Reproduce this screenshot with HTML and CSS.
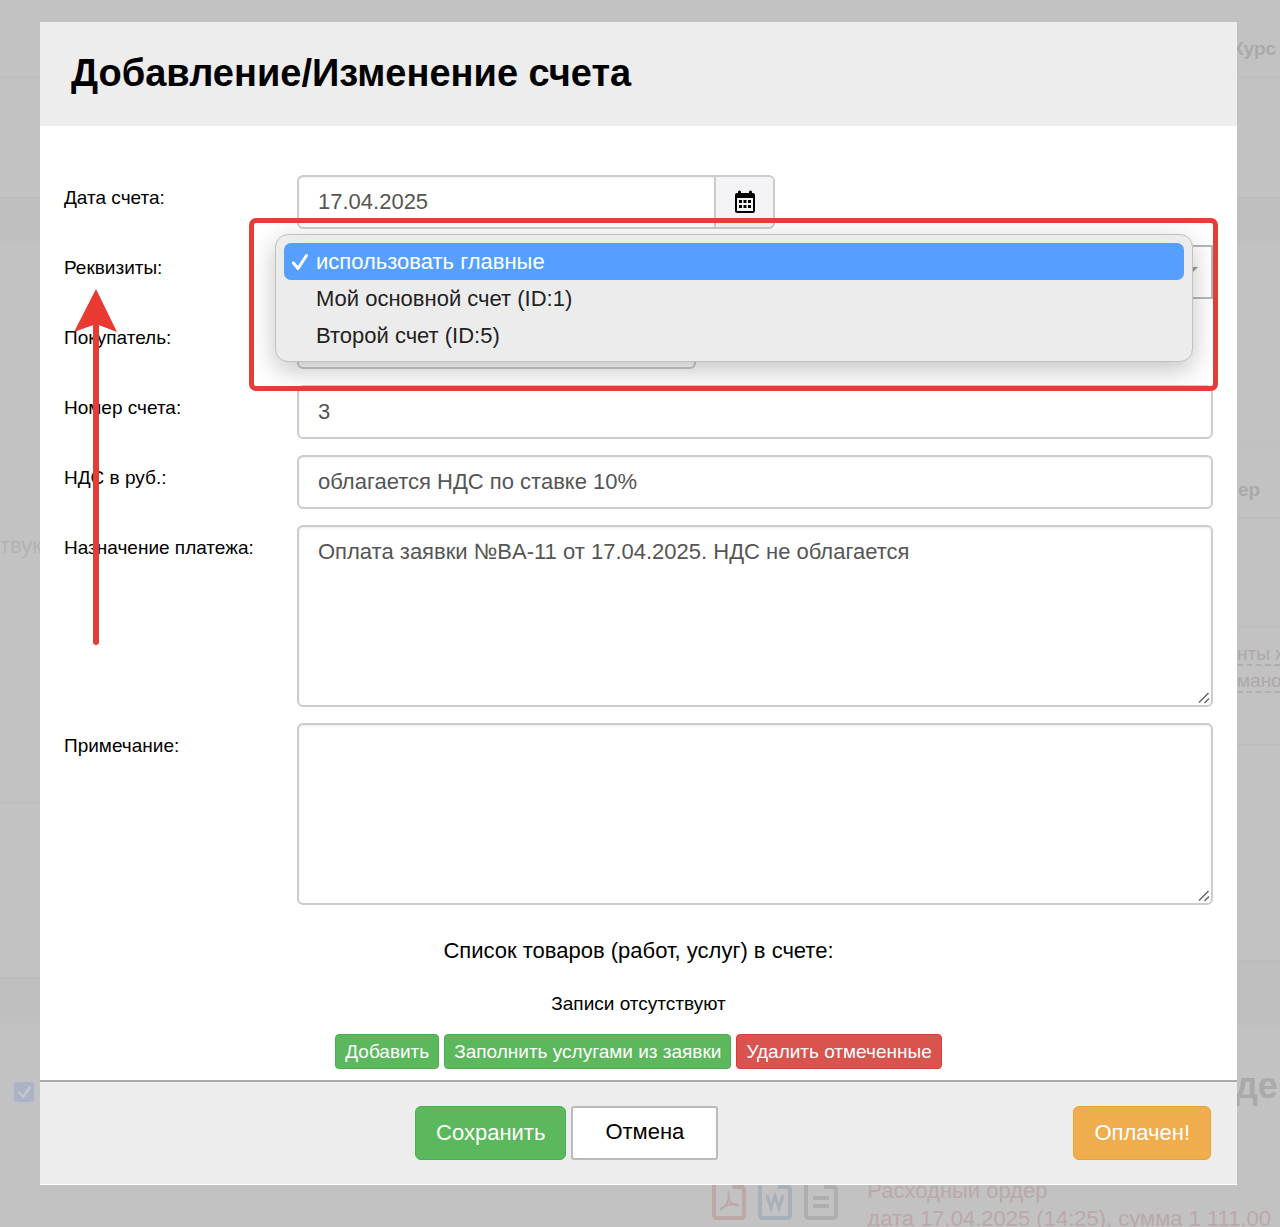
FILE: index.html
```html
<!DOCTYPE html>
<html lang="ru">
<head>
<meta charset="utf-8">
<meta name="viewport" content="width=device-width, initial-scale=1">
<title>Добавление/Изменение счета</title>
<link rel="stylesheet" href="styles.css">
</head>
<body>
<div class="page" aria-hidden="true">
  <div class="page-columns">
    <div class="page-side">
      <div class="cell cell-head"></div>
      <div class="cell cell-tall"></div>
      <div class="cell cell-band"></div>
      <div class="cell cell-left-text">твук</div>
      <div class="cell cell-left-gap"></div>
      <div class="cell cell-band"></div>
      <div class="cell-check"><svg width="20" height="20" viewBox="0 0 20 20"><rect width="20" height="20" rx="3" fill="#aab4c6"/><path d="M5 10l4 5 7-10" fill="none" stroke="#c6c8cb" stroke-width="2.500"/></svg></div>
    </div>
    <div class="page-side page-side-right">
      <div class="cell cell-head cell-strong">Курс</div>
      <div class="cell cell-tall"></div>
      <div class="cell cell-band"></div>
      <div class="cell cell-right-gap"></div>
      <div class="cell cell-sub cell-strong">ер</div>
      <div class="cell cell-line"></div>
      <div class="cell cell-links"><span class="dashed">нты ж</span><span class="dashed">мано</span></div>
      <div class="cell cell-right-long"></div>
      <div class="cell cell-band cell-band-tall"></div>
      <div class="cell-heading">дер</div>
    </div>
  </div>
  <div class="page-docs">
    <div class="doc-icons">
      <svg width="34" height="44" viewBox="0 0 34 44" fill="none" stroke="#bda8a8" stroke-width="4"><path d="M22 2H5Q2 2 2 5V38Q2 41 5 41H29Q32 41 32 38V12L22 2V10H32"/><path d="M8 33C15 29 18 22 16 14M16 20C18 27 22 29 27 28M9 31C16 28 21 26 27 28" stroke-width="2"/></svg>
      <svg width="34" height="44" viewBox="0 0 34 44" fill="none" stroke="#a8b1b9" stroke-width="4"><path d="M22 2H5Q2 2 2 5V38Q2 41 5 41H29Q32 41 32 38V12L22 2V10H32"/><path d="M9 18l4 13 4-12 4 12 4-13" stroke-width="3"/></svg>
      <svg width="34" height="44" viewBox="0 0 34 44" fill="none" stroke="#aeaeae" stroke-width="4"><path d="M22 2H5Q2 2 2 5V38Q2 41 5 41H29Q32 41 32 38V12L22 2V10H32M9 21H25M9 29H25"/></svg>
    </div>
    <div class="doc-text">Расходный ордер<br>дата 17.04.2025 (14:25), сумма 1 111.00</div>
  </div>
</div>

<form class="modal" role="dialog" aria-labelledby="modal-title">
  <header class="modal-header"><h1 class="modal-title" id="modal-title">Добавление/Изменение счета</h1></header>
  <div class="modal-body">
    <div class="row">
      <label class="label" for="date">Дата счета:</label>
      <div class="date-group">
        <input class="control date-input" id="date" type="text" value="17.04.2025">
        <button class="date-button" type="button" aria-label="Календарь">
          <svg width="22" height="24" viewBox="0 0 22 24"><path d="M4 2q0-1.500 1.500-1.500T7 2v1h8V2q0-1.500 1.500-1.500T18 2v1h1q2 0 2 2v16q0 2-2 2H3q-2 0-2-2V5q0-2 2-2h1z"/><path fill="#f4f4f6" d="M3 8h16v13H3z"/><path d="M5 10h3v3H5zm4.500 0h3v3h-3zm4.500 0h3v3h-3zM5 15h3v3H5zm4.500 0h3v3h-3zm4.500 0h3v3h-3z"/></svg>
        </button>
      </div>
    </div>
    <div class="row row-open">
      <label class="label" for="details">Реквизиты:</label>
      <svg class="arrow" width="44" height="358" viewBox="0 0 44 358" aria-hidden="true"><path d="M22 34V353" stroke="#e33d34" stroke-width="6" stroke-linecap="round"/><path d="M22 0L43 43L22 35L0 43Z" fill="#e93a31"/></svg>
      <div class="select-cell">
        <div class="select-wrap">
          <select class="control select-square" id="details"><option>использовать главные</option><option>Мой основной счет (ID:1)</option><option>Второй счет (ID:5)</option></select>
        </div>
        <ul class="menu" role="listbox" aria-label="Реквизиты">
          <li class="menu-item menu-item-active" role="option" aria-selected="true"><svg class="menu-check" width="16" height="18" viewBox="0 0 16 18" aria-hidden="true"><path d="M1.500 10l4.500 5.500L14.500 2.500" fill="none" stroke="#fff" stroke-width="3" stroke-linecap="round" stroke-linejoin="round"/></svg>использовать главные</li>
          <li class="menu-item" role="option" aria-selected="false">Мой основной счет (ID:1)</li>
          <li class="menu-item" role="option" aria-selected="false">Второй счет (ID:5)</li>
        </ul>
        <div class="frame" aria-hidden="true"></div>
      </div>
    </div>
    <div class="row">
      <label class="label" for="buyer">Покупатель:</label>
      <select class="control buyer" id="buyer"><option></option></select>
    </div>
    <div class="row">
      <label class="label" for="number">Номер счета:</label>
      <input class="control" id="number" type="text" value="3">
    </div>
    <div class="row">
      <label class="label" for="vat">НДС в руб.:</label>
      <input class="control" id="vat" type="text" value="облагается НДС по ставке 10%">
    </div>
    <div class="row">
      <label class="label" for="purpose">Назначение платежа:</label>
      <div class="area-wrap">
        <textarea class="control area" id="purpose">Оплата заявки №BA-11 от 17.04.2025. НДС не облагается</textarea>
        <svg class="grip" width="12" height="12" viewBox="0 0 12 12" aria-hidden="true"><path d="M1 10.500L10.500 1M6.500 11L11 6.500" stroke="#666" stroke-width="1.500"/></svg>
      </div>
    </div>
    <div class="row">
      <label class="label" for="note">Примечание:</label>
      <div class="area-wrap">
        <textarea class="control area" id="note"></textarea>
        <svg class="grip" width="12" height="12" viewBox="0 0 12 12" aria-hidden="true"><path d="M1 10.500L10.500 1M6.500 11L11 6.500" stroke="#666" stroke-width="1.500"/></svg>
      </div>
    </div>
    <section class="goods">
      <h2 class="goods-title">Список товаров (работ, услуг) в счете:</h2>
      <p class="goods-empty">Записи отсутствуют</p>
      <div class="goods-actions">
        <button class="btn btn-small btn-green" type="button">Добавить</button>
        <button class="btn btn-small btn-green" type="button">Заполнить услугами из заявки</button>
        <button class="btn btn-small btn-red" type="button">Удалить отмеченные</button>
      </div>
    </section>
  </div>
  <footer class="modal-footer">
    <div class="footer-main">
      <button class="btn btn-green" type="submit">Сохранить</button>
      <button class="btn btn-plain" type="button">Отмена</button>
    </div>
    <button class="btn btn-orange" type="button">Оплачен!</button>
  </footer>
</form>
</body>
</html>
```
FILE: styles.css
```css
* { box-sizing: border-box; }

body {
  margin: 0;
  min-height: 100vh;
  padding: 22px 43px 42px 40px;
  position: relative;
  background: #c2c2c2;
  color: #000;
  font-family: "Liberation Sans", Arial, sans-serif;
  font-size: 19px;
}

/* Dimmed page behind the dialog */
.page {
  position: absolute;
  inset: 0;
  overflow: hidden;
  color: #aaa;
}
.page-columns { display: flex; justify-content: space-between; height: 1177px; }
.page-side { width: 48px; white-space: nowrap; }
.cell { border-bottom: 2px solid #bdbdbd; line-height: 26px; }
.cell-head { height: 78px; padding-top: 36px; }
.cell-tall { height: 121px; }
.cell-band { height: 46px; background: #bfbfbf; border-bottom-color: #c0c0c0; }
.cell-left-text { height: 559px; padding-top: 288px; font-size: 22px; color: #b3b3b3; }
.cell-left-gap { height: 175px; }
.cell-check { padding: 57px 0 0 14px; }
.cell-strong { font-weight: bold; }
.cell-right-gap { height: 198px; border-bottom-color: #c0c0c0; }
.cell-sub { height: 76px; padding: 34px 0 0 6px; }
.cell-line { height: 109px; }
.cell-links { height: 118px; padding: 13px 0 0 5px; color: #aea9a9; }
.dashed { display: block; height: 25px; margin-bottom: 2px; border-bottom: 2px dashed #b3adad; }
.cell-right-long { height: 216px; }
.cell-band-tall { height: 64px; }
.cell-heading { padding: 38px 0 0 3px; font-size: 36px; line-height: 44px; font-weight: bold; }

.page-docs {
  display: flex;
  justify-content: flex-end;
  gap: 29px;
  color: #bba9a9;
  font-size: 22px;
  line-height: 28px;
  white-space: nowrap;
  padding-right: 9px;
}
.doc-icons { display: flex; gap: 12px; }

/* Dialog */
.modal { position: relative; background: #fff; }
.modal-header { padding: 29px 31px 30px; background: #ededed; }
.modal-title { margin: 0; font-size: 38px; line-height: 45px; }
.modal-body {
  display: flex;
  flex-direction: column;
  gap: 16px;
  padding: 49px 24px 11px;
}
.row { display: grid; grid-template-columns: 233px 1fr; position: relative; }
.row-open { z-index: 1; }
.label { padding-top: 12px; line-height: 22px; }

.control {
  display: block;
  width: 100%;
  height: 54px;
  margin: 0;
  padding: 0 19px;
  border: 2px solid #ccc;
  border-radius: 6px;
  background: #fff;
  box-shadow: inset 0 1px 2px rgba(0, 0, 0, .08);
  color: #555;
  font: inherit;
  font-size: 22px;
  line-height: 26px;
}
.area-wrap { position: relative; }
.area { height: 182px; padding: 12px 19px; resize: none; }
.grip { position: absolute; right: 3px; bottom: 3px; pointer-events: none; }
.date-group { display: flex; width: 478px; }
.date-input { flex: 1; border-radius: 6px 0 0 6px; }
.date-button {
  display: grid;
  place-items: center;
  width: 59px;
  padding: 0;
  border: 2px solid #ccc;
  border-left: 0;
  border-radius: 0 6px 6px 0;
  background: #f4f4f6;
}
.buyer { width: 399px; appearance: none; }

.select-cell, .select-wrap { position: relative; }
.select-square { appearance: none; border-color: #b4b8bd; border-radius: 0; box-shadow: none; }
.select-wrap::after {
  content: "";
  position: absolute;
  top: 22px;
  right: 15px;
  border: 5px solid transparent;
  border-top-color: #999;
}
.menu {
  position: absolute;
  top: -11px;
  left: -22px;
  right: 20px;
  margin: 0;
  padding: 8px 8px 7px;
  list-style: none;
  border: 1px solid #c2c2c2;
  border-radius: 13px;
  background: #ececec;
  box-shadow: 0 8px 26px rgba(0, 0, 0, .24);
  color: #222;
  font-size: 22px;
}
.menu-item { position: relative; padding-left: 32px; line-height: 37px; }
.menu-item-active { border-radius: 7px; background: #579fff; color: #fff; }
.menu-check { position: absolute; left: 8px; top: 10px; }

/* Annotations */
.frame {
  position: absolute;
  top: -27px;
  left: -48px;
  right: -5px;
  height: 173px;
  border: 5px solid #e13f37;
  border-radius: 7px;
  pointer-events: none;
}
.arrow { position: absolute; top: 44px; left: 10px; pointer-events: none; }

.goods { padding-top: 16px; text-align: center; }
.goods-title { margin: 0 0 28px; font-size: 22px; line-height: 28px; font-weight: normal; }
.goods-empty { margin: 0 0 19px; line-height: 22px; }
.goods-actions { display: flex; justify-content: center; gap: 5px; }

.btn {
  height: 54px;
  padding: 0 20px;
  border: 1px solid;
  border-radius: 6px;
  color: #fff;
  font: inherit;
  font-size: 22px;
  white-space: nowrap;
}
.btn-small { height: 35px; padding: 0 9px; border-radius: 4px; font-size: 19px; }
.btn-green { background: #5cb85c; border-color: #4cae4c; }
.btn-red { background: #d9534f; border-color: #d43f3a; }
.btn-orange { background: #f0ad4e; border-color: #eea236; }
.btn-plain { padding: 0 32px 3px; background: #fff; border: 2px solid #bbb; border-radius: 3px; color: #000; }

.modal-footer {
  display: flex;
  align-items: center;
  padding: 24px 26px 24px 20px;
  border-top: 2px solid #aaa;
  border-bottom: 1px solid #fff;
  background: #ededed;
}
.footer-main { flex: 1; display: flex; justify-content: center; gap: 5px; }
```
